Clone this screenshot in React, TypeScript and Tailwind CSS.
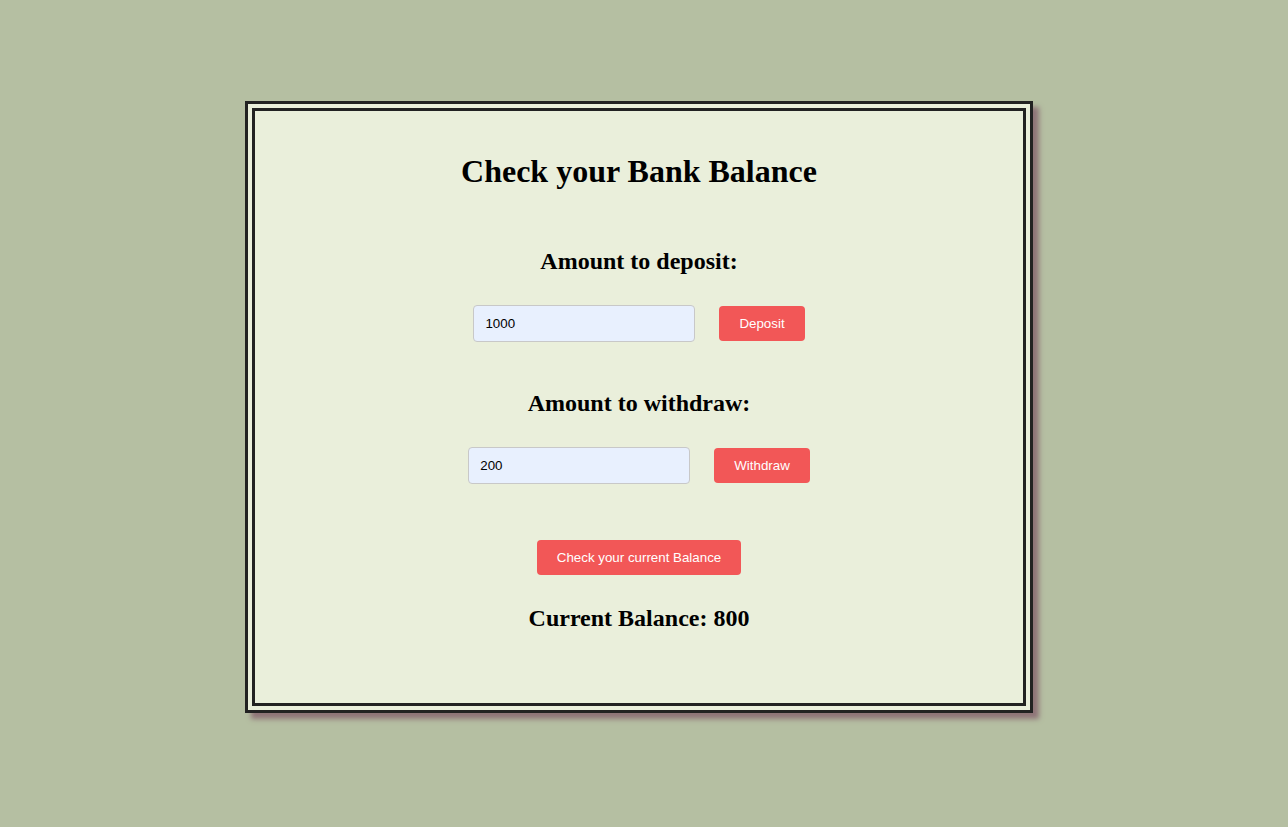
import { useState } from "react";

const serif = "font-['Liberation_Serif','Times_New_Roman',serif]";
const sans = "font-['Liberation_Sans',Arial,sans-serif]";

export default function App() {
  const [deposit, setDeposit] = useState("1000");
  const [withdraw, setWithdraw] = useState("200");
  const [balance, setBalance] = useState(800);
  const [shown, setShown] = useState(800);

  return (
    <div className="min-h-screen w-full bg-[#b5bfa2] flex justify-center pt-[101px] pr-[10px]">
      <div className="w-[788px] h-[612px] border-[10px] border-double border-[#222222] bg-[#eaefdb] shadow-[6px_6px_5px_#8f7478] flex flex-col items-center pt-[42px] text-black">
        <h1 className={`${serif} text-[32px] leading-[37px] font-bold`}>Check your Bank Balance</h1>

        <h2 className={`${serif} text-[24px] leading-[28px] font-bold mt-[57px]`}>Amount to deposit:</h2>
        <div className="flex items-center gap-6 mt-[30px]">
          <input
            value={deposit}
            onChange={(e) => setDeposit(e.target.value)}
            className={`${sans} w-[222px] h-[37px] pl-[11px] pr-3 text-[13.33px] bg-[#e8f0fe] border border-[#c8c8c8] rounded-[4px] outline-none`}
          />
          <button
            onClick={() => setBalance(balance + Number(deposit || 0))}
            className={`${sans} h-[35px] px-5 text-[13.33px] text-white bg-[#f25757] rounded-[4px]`}
          >
            Deposit
          </button>
        </div>

        <h2 className={`${serif} text-[24px] leading-[28px] font-bold mt-[47px]`}>Amount to withdraw:</h2>
        <div className="flex items-center gap-6 mt-[30px]">
          <input
            value={withdraw}
            onChange={(e) => setWithdraw(e.target.value)}
            className={`${sans} w-[222px] h-[37px] pl-[11px] pr-3 text-[13.33px] bg-[#e8f0fe] border border-[#c8c8c8] rounded-[4px] outline-none`}
          />
          <button
            onClick={() => setBalance(balance - Number(withdraw || 0))}
            className={`${sans} h-[35px] px-5 text-[13.33px] text-white bg-[#f25757] rounded-[4px]`}
          >
            Withdraw
          </button>
        </div>

        <button
          onClick={() => setShown(balance)}
          className={`${sans} h-[35px] px-5 mt-[56px] text-[13.33px] text-white bg-[#f25757] rounded-[4px]`}
        >
          Check your current Balance
        </button>

        <h2 className={`${serif} text-[24px] leading-[28px] font-bold mt-[29px]`}>Current Balance: {shown}</h2>
      </div>
    </div>
  );
}
